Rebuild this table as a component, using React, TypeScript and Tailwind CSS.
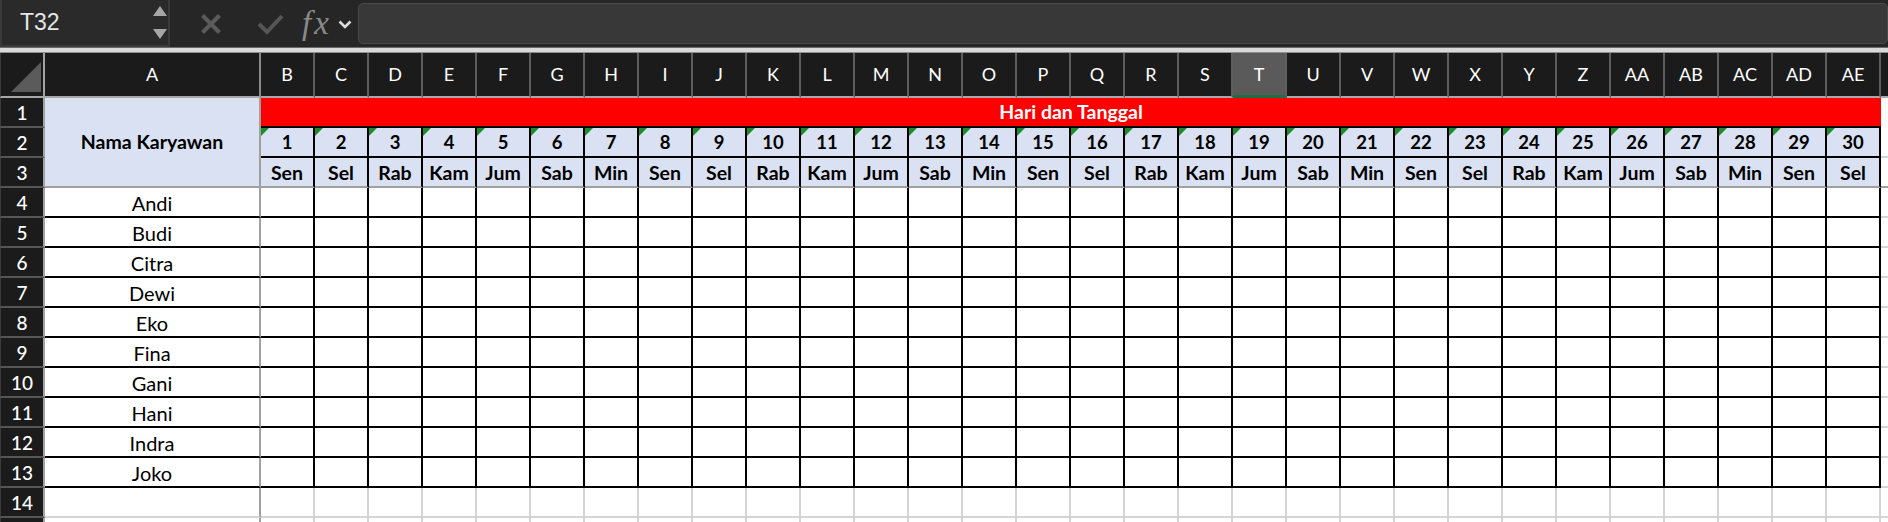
import React from 'react';

const COLS = ['B','C','D','E','F','G','H','I','J','K','L','M','N','O','P','Q','R','S','T','U','V','W','X','Y','Z','AA','AB','AC','AD','AE'];
const DAYS = ['Sen','Sel','Rab','Kam','Jum','Sab','Min'];
const NAMES = ['Andi','Budi','Citra','Dewi','Eko','Fina','Gani','Hani','Indra','Joko'];

function RowNum({ n }: { n?: number }) {
  return (
    <div className="flex items-center justify-center border-l border-l-[#3c3c3c] border-r-2 border-r-[#a3a3a3] border-b-2 border-b-[#555555] bg-[#1b1b1b] pt-[2px] text-[19px] font-medium text-white">
      {n}
    </div>
  );
}

function FormulaBar() {
  return (
    <div className="flex h-[47px] items-center bg-[#262626]">
      <div className="flex h-full w-[170px] items-center border-l-2 border-b-2 border-r-2 border-[#3a3a3a] bg-[#2a2a2a] pl-[18px]">
        <span className="font-['Liberation_Sans',sans-serif] text-[23px] text-[#e6e6e6]">T32</span>
        <div className="ml-auto mr-[1px] flex flex-col gap-[13px]">
          <svg width="14" height="10" viewBox="0 0 14 10"><polygon points="7,0 14,10 0,10" fill="#a7a7a7" /></svg>
          <svg width="14" height="10" viewBox="0 0 14 10"><polygon points="0,0 14,0 7,10" fill="#a7a7a7" /></svg>
        </div>
      </div>
      <svg className="ml-[30px]" width="22" height="22" viewBox="0 0 22 22">
        <path d="M2.5 2.5 L19.5 19.5 M19.5 2.5 L2.5 19.5" stroke="#5b5b5b" strokeWidth="4" strokeLinecap="butt" fill="none" />
      </svg>
      <svg className="ml-[35px]" width="27" height="22" viewBox="0 0 27 22">
        <path d="M2 11 L10 19 L25 3" stroke="#565656" strokeWidth="4" fill="none" />
      </svg>
      <span className="ml-[18px] mb-[1px] font-['Liberation_Serif',serif] text-[33px] italic leading-none tracking-[3px] text-[#8a8a8a]">fx</span>
      <svg className="ml-[6px] mt-[2px]" width="14" height="9" viewBox="0 0 14 9">
        <path d="M1.5 1.5 L7 7 L12.5 1.5" stroke="#dddddd" strokeWidth="2.6" fill="none" />
      </svg>
      <div className="ml-[6px] h-[41px] flex-1 rounded-[5px] border border-[#4a4a4a] bg-[#383838]" />
    </div>
  );
}

export default function App() {
  const cells: React.ReactNode[] = [];

  // header row
  cells.push(
    <div key="corner" className="relative border-l border-l-[#3c3c3c] border-r-2 border-r-[#a3a3a3] border-b-2 border-b-[#a8a8a8] bg-[#1b1b1b]">
      <svg className="absolute left-[10px] top-[9px]" width="30" height="30" viewBox="0 0 30 30">
        <polygon points="30,0 30,30 0,30" fill="#5b5b5b" />
      </svg>
    </div>
  );
  cells.push(
    <div key="hA" className="flex items-center justify-center border-r-2 border-r-[#8a8a8a] border-b-2 border-b-[#a8a8a8] bg-[#1b1b1b] text-[18px] text-white">A</div>
  );
  COLS.forEach((c) => {
    const sel = c === 'T';
    cells.push(
      <div
        key={'h' + c}
        className={
          sel
            ? 'flex items-center justify-center border-r-2 border-r-[#5e5e5e] border-b-[3px] border-b-[#1f6e43] bg-[#5a5a5a] text-[18px] text-white'
            : 'flex items-center justify-center border-r-2 border-r-[#5e5e5e] border-b-2 border-b-[#a8a8a8] bg-[#1b1b1b] text-[18px] text-white'
        }
      >
        {c}
      </div>
    );
  });
  cells.push(
    <div key="hAF" className="border-r-2 border-r-[#5e5e5e] border-b-2 border-b-[#a8a8a8] bg-[#1b1b1b]" />
  );

  // row 1
  cells.push(<RowNum key="r1" n={1} />);
  cells.push(
    <div key="A1" className="row-span-3 flex items-center justify-center border-r-2 border-r-[#a0a0a0] border-b-2 border-b-[#a0a0a0] bg-[#d9e1f2] text-[19.5px] font-bold text-black">
      Nama Karyawan
    </div>
  );
  cells.push(
    <div key="B1" className="col-span-30 flex items-center justify-center border-b-2 border-b-black bg-[#ff0000] text-[19.5px] font-bold text-white">
      Hari dan Tanggal
    </div>
  );
  cells.push(<div key="AF1" className="bg-white" />);

  // row 2
  cells.push(<RowNum key="r2" n={2} />);
  COLS.forEach((c, i) => {
    cells.push(
      <div key={c + '2'} className="relative flex items-center justify-center border-r-2 border-r-black border-b-2 border-b-black bg-[#d9e1f2] pt-[2px] text-[18.5px] font-bold text-black">
        <div className="absolute left-0 top-0 h-0 w-0 border-t-[8px] border-r-[8px] border-t-[#1d8a2e] border-r-transparent" />
        {i + 1}
      </div>
    );
  });
  cells.push(<div key="AF2" className="border-b-2 border-b-[#d4d4d4] bg-white" />);

  // row 3
  cells.push(<RowNum key="r3" n={3} />);
  COLS.forEach((c, i) => {
    cells.push(
      <div key={c + '3'} className="flex items-center justify-center border-r-2 border-r-black border-b-2 border-b-[#a0a0a0] bg-[#d9e1f2] pt-[2px] text-[19.5px] font-bold text-black">
        {DAYS[i % 7]}
      </div>
    );
  });
  cells.push(<div key="AF3" className="border-b-2 border-b-[#a0a0a0] bg-white" />);

  // rows 4-13
  NAMES.forEach((name, r) => {
    const rn = r + 4;
    cells.push(<RowNum key={'r' + rn} n={rn} />);
    cells.push(
      <div key={'A' + rn} className="flex items-center justify-center border-r-2 border-r-[#a0a0a0] border-b-2 border-b-black bg-white pt-[2px] text-[20px] text-black">
        {name}
      </div>
    );
    COLS.forEach((c) => {
      cells.push(<div key={c + rn} className="border-r-2 border-r-black border-b-2 border-b-black bg-white" />);
    });
    cells.push(<div key={'AF' + rn} className="border-b-2 border-b-[#d4d4d4] bg-white" />);
  });

  // rows 14-15
  [14, 15].forEach((rn) => {
    cells.push(<RowNum key={'r' + rn} n={rn === 14 ? 14 : undefined} />);
    cells.push(<div key={'A' + rn} className="border-r-2 border-r-[#a0a0a0] border-b-2 border-b-[#d4d4d4] bg-white" />);
    COLS.forEach((c) => {
      cells.push(<div key={c + rn} className="border-r-2 border-r-[#d4d4d4] border-b-2 border-b-[#d4d4d4] bg-white" />);
    });
    cells.push(<div key={'AF' + rn} className="border-b-2 border-b-[#d4d4d4] bg-white" />);
  });

  return (
    <div className="h-[522px] w-[1888px] overflow-hidden bg-white">
      <FormulaBar />
      <div className="h-[6px] border-t border-t-[#6a6a6a] border-b border-b-[#8e8e8e] bg-[#dadada]" />
      <div className="grid grid-cols-[45px_216px_repeat(31,54px)] grid-rows-[45px_repeat(15,30px)] font-['Lato',sans-serif]">
        {cells}
      </div>
    </div>
  );
}
